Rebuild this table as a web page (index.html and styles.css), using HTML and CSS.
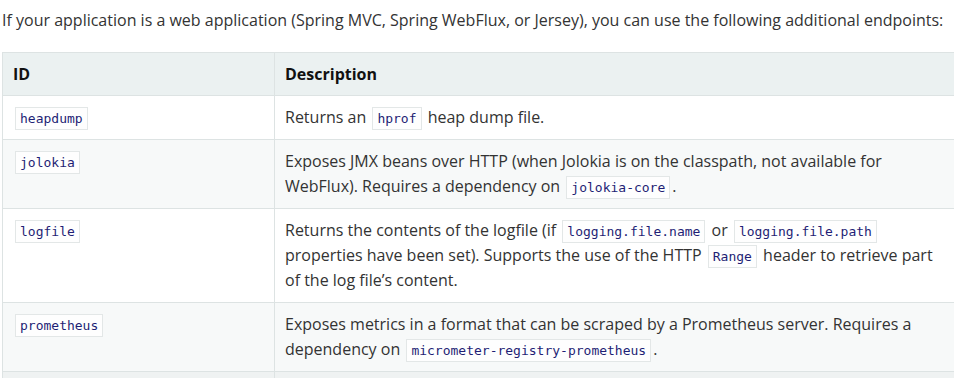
FILE: index.html
```html
<!DOCTYPE html>
<html>
<head>
<meta charset="UTF-8">
<title>Actuator web endpoints</title>
<link rel="stylesheet" href="styles.css">
</head>
<body>
<p class="intro">If your application is a web application (Spring MVC, Spring WebFlux, or Jersey), you can use the following additional endpoints:</p>
<table class="endpoints">
<tr>
<th class="col-id">ID</th><th>Description</th>
</tr>
<tr>
<td><code>heapdump</code></td>
<td>Returns an <code>hprof</code> heap dump file.</td>
</tr>
<tr class="odd">
<td><code>jolokia</code></td>
<td>Exposes JMX beans over HTTP (when Jolokia is on the classpath, not available for WebFlux). Requires a dependency on <code>jolokia-core</code>.</td>
</tr>
<tr>
<td><code>logfile</code></td>
<td>Returns the contents of the logfile (if <code>logging.file.name</code> or <code>logging.file.path</code> properties have been set). Supports the use of the HTTP <code>Range</code> header to retrieve part of the log file’s content.</td>
</tr>
<tr class="odd">
<td><code>prometheus</code></td>
<td>Exposes metrics in a format that can be scraped by a Prometheus server. Requires a dependency on <code>micrometer-registry-prometheus</code>.</td>
</tr>
<tr class="next">
<td>&nbsp;</td><td>&nbsp;</td>
</tr>
</table>
</body>
</html>
```

FILE: styles.css
```css
body {
  margin: 0;
  padding: 0 0 0 2px;
  overflow: hidden;
  background: #ffffff;
  color: #333333;
  font-family: "Open Sans", "Liberation Sans", sans-serif;
  font-size: 16px;
  line-height: 25px;
}

.intro {
  margin: 8px 0 19px 0;
  white-space: nowrap;
}

table.endpoints {
  border-collapse: collapse;
  width: 958px;
  table-layout: fixed;
}

th, td {
  border: 1px solid #dde3e3;
  padding: 9px 10px;
  text-align: left;
  vertical-align: top;
}

th {
  padding-bottom: 8px;
  background: #ebf1f1;
  color: #111111;
  font-weight: bold;
}

th.col-id {
  width: 251px;
}

tr.odd td {
  background: #f7f9f9;
}

tr.next td {
  background: #eff2f2;
}

code {
  font-family: "DejaVu Sans Mono", "Liberation Mono", monospace;
  font-size: 13px;
  line-height: 1;
  color: #1f1f75;
  background: #fefefe;
  border: 1px solid #e3e7e7;
  padding: 3px 4px;
  margin: 0 2px;
}
```
